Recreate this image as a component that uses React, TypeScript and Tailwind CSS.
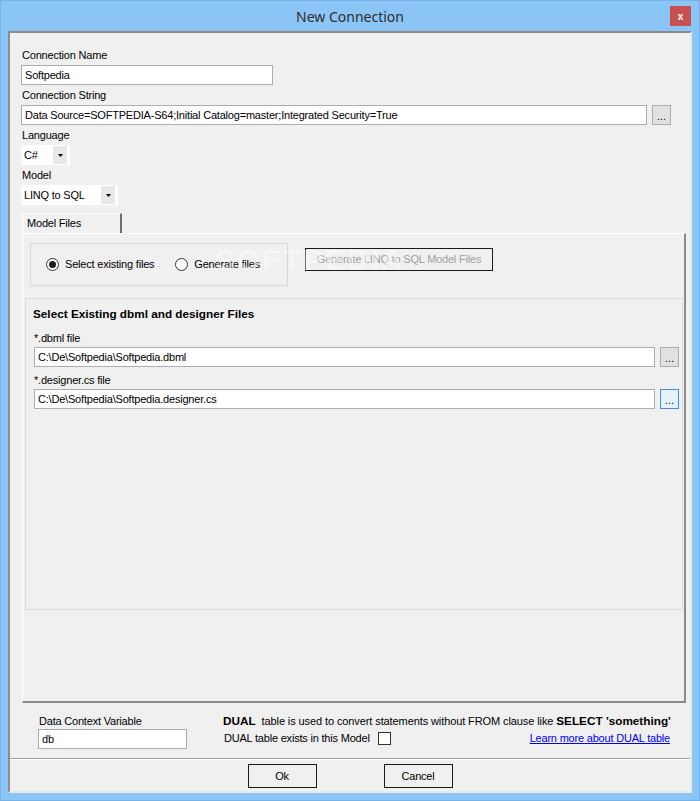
import React from 'react';

function TextBox({ value, className }: { value: string; className: string }) {
  return (
    <div
      className={`h-[20px] bg-white border border-[#abadb3] flex items-center pl-[3px] whitespace-nowrap overflow-hidden ${className}`}
    >
      {value}
    </div>
  );
}

function Browse({ focused }: { focused?: boolean }) {
  return (
    <div
      className={`w-[19px] h-[20px] shrink-0 flex items-center justify-center border text-[11px] tracking-normal ${
        focused ? 'border-[#3d8ee8] bg-[#e5f1fb]' : 'border-[#adadad] bg-[#e1e1e1]'
      }`}
    >
      <span className="mt-[3px]">...</span>
    </div>
  );
}

function Combo({ value, className }: { value: string; className: string }) {
  return (
    <div className={`h-[20px] bg-white flex items-stretch py-[1px] pr-[3px] ${className}`}>
      <div className="flex-1 flex items-center pl-[3px]">{value}</div>
      <div className="w-[14px] bg-[#e8e8e8] flex items-center justify-center">
        <svg width="5" height="3" viewBox="0 0 5 3">
          <polygon points="0,0 5,0 2.5,3" fill="#000" />
        </svg>
      </div>
    </div>
  );
}

function Radio({ checked, label }: { checked?: boolean; label: string }) {
  return (
    <div className="flex items-center gap-[6px]">
      <div className="w-[13px] h-[13px] rounded-full border border-[#333] bg-white flex items-center justify-center">
        {checked && <div className="w-[7px] h-[7px] rounded-full bg-[#1c1c1c]" />}
      </div>
      <span>{label}</span>
    </div>
  );
}

function Label({ text }: { text: string }) {
  return <div className="h-[13px] leading-[15px] mb-[4px] pl-[1px]">{text}</div>;
}

export default function App() {
  return (
    <div className="w-[700px] h-[801px] bg-[#8bc5f6] border border-[#78b2e8] flex flex-col px-[7px] pb-[7px] font-['Liberation_Sans',Arial,sans-serif] text-[11px] leading-[13px] tracking-[-0.2px] text-black">
      {/* title bar */}
      <div className="h-[30px] shrink-0 relative flex items-center justify-center">
        <span className="font-['Noto_Sans',sans-serif] text-[14px] tracking-normal text-[#2d2d2d] mt-[1px]">
          New Connection
        </span>
        <div className="absolute right-[1px] top-[5px] w-[21px] h-[20px] bg-[#c75050] flex items-center justify-center text-white font-bold text-[10px]">
          x
        </div>
      </div>

      {/* client area */}
      <div className="flex-1 flex flex-col bg-[#f0f0f0] border-t-2 border-l-2 border-[#8c8c8c] border-r-2 border-b-2 border-r-[#e8e8e8] border-b-[#e8e8e8]">
        <div className="flex flex-col pl-[11px] pt-[15px]">
          <Label text="Connection Name" />
          <TextBox value="Softpedia" className="w-[252px] mb-[3px]" />
          <Label text="Connection String" />
          <div className="flex gap-[5px] mb-[3px]">
            <TextBox
              value="Data Source=SOFTPEDIA-S64;Initial Catalog=master;Integrated Security=True"
              className="w-[626px]"
            />
            <Browse />
          </div>
          <Label text="Language" />
          <Combo value="C#" className="w-[49px] mb-[3px]" />
          <Label text="Model" />
          <Combo value="LINQ to SQL" className="w-[97px] mb-[8px]" />

          {/* tab control */}
          <div className="ml-[1px] w-[100px] h-[20px] border-t border-l border-white border-r-2 border-r-[#6e6e6e] flex items-center pl-[4px]">
            Model Files
          </div>
          <div className="ml-[1px] w-[664px] h-[470px] border-t border-l border-white border-r-2 border-b-2 border-r-[#8a8a8a] border-b-[#8a8a8a] flex flex-col relative">
            <div className="flex items-start">
              <div className="ml-[7px] mt-[9px] w-[258px] h-[43px] border border-[#d8d8d8] flex items-center pl-[15px] gap-[21px]">
                <Radio checked label="Select existing files" />
                <Radio label="Generate files" />
              </div>
              <div className="ml-[17px] mt-[14px] w-[188px] h-[23px] border border-[#1a1a1a] flex items-center justify-center text-[#a0a0a0]">
                Generate LINQ to SQL Model Files
              </div>
            </div>
            <div className="absolute left-[192px] top-[11px] text-[30px] leading-[30px] font-bold text-white opacity-40 tracking-[2px] pointer-events-none">
              SOFTPEDIA
            </div>

            <div className="ml-[2px] mt-[12px] w-[658px] h-[312px] border border-[#dadada] flex flex-col pl-[8px] pr-[3px] pt-[8px]">
              <div className="h-[13px] font-bold text-[11.75px] tracking-normal -ml-[1px]">
                Select Existing dbml and designer Files
              </div>
              <div className="h-[13px] mt-[12px] mb-[2px]">*.dbml file</div>
              <div className="flex gap-[5px]">
                <TextBox value="C:\De\Softpedia\Softpedia.dbml" className="w-[621px]" />
                <Browse />
              </div>
              <div className="h-[13px] mt-[7px] mb-[2px]">*.designer.cs file</div>
              <div className="flex gap-[5px]">
                <TextBox value="C:\De\Softpedia\Softpedia.designer.cs" className="w-[621px]" />
                <Browse focused />
              </div>
            </div>
          </div>
        </div>

        {/* data context / DUAL section */}
        <div className="flex mt-[11px] pl-[28px]">
          <div className="flex flex-col w-[149px]">
            <div className="h-[13px] leading-[14px] mb-[2px] pl-[1px]">Data Context Variable</div>
            <TextBox value="db" className="w-[149px]" />
          </div>
          <div className="flex flex-col ml-[36px] w-[447px]">
            <div className="h-[13px] leading-[14px] whitespace-nowrap">
              <span className="font-bold text-[11.75px] tracking-normal">DUAL</span>
              <span className="tracking-[-0.1px]">
                &nbsp;&nbsp;table is used to convert statements without FROM clause like{' '}
              </span>
              <span className="font-bold text-[11.75px] tracking-normal">SELECT 'something'</span>
            </div>
            <div className="h-[13px] mt-[5px] flex items-center">
              <span className="pl-[1px]">DUAL table exists in this Model</span>
              <div className="ml-[8px] w-[13px] h-[13px] border border-[#333] bg-white" />
              <span className="ml-auto text-[#0000ff] underline">Learn more about DUAL table</span>
            </div>
          </div>
        </div>

        {/* buttons */}
        <div className="mt-[9px] border-t border-[#a0a0a0]" />
        <div className="border-t border-white" />
        <div className="flex justify-center gap-[67px] pt-[4px]">
          <div className="w-[69px] h-[24px] border border-[#1a1a1a] flex items-center justify-center">Ok</div>
          <div className="w-[69px] h-[24px] border border-[#1a1a1a] flex items-center justify-center">Cancel</div>
        </div>
      </div>
    </div>
  );
}
